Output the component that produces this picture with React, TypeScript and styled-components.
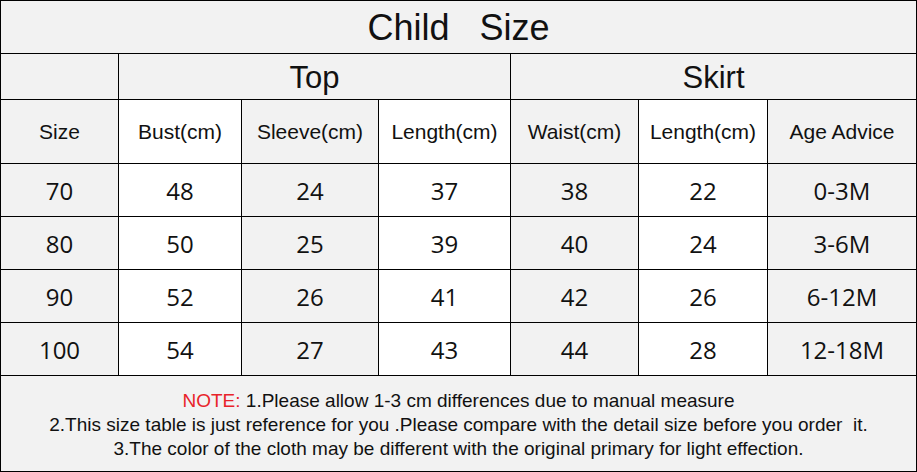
import { createGlobalStyle } from "styled-components";
import styled from "styled-components";

const GlobalStyle = createGlobalStyle`
  html, body {
    margin: 0;
    padding: 0;
    background: #ffffff;
  }
`;

const GRAY = "#f2f2f2";

const Table = styled.div`
  display: grid;
  grid-template-columns: 117px 122px 136px 131px 127px 128px 148px;
  grid-template-rows: 52px 45px 63px 52px 52px 52px 52px 95px;
  gap: 1px;
  padding: 1px;
  width: 917px;
  height: 472px;
  box-sizing: border-box;
  background: #000;
  font-family: "Liberation Sans", Arial, sans-serif;
  color: #111;
`;

const Cell = styled.div<{ $shade?: boolean; $span?: number }>`
  display: flex;
  align-items: center;
  justify-content: center;
  background: ${(p) => (p.$shade ? GRAY : "#fff")};
  grid-column: ${(p) => (p.$span ? `span ${p.$span}` : "auto")};
`;

const Title = styled(Cell)`
  font-size: 36px;
  white-space: pre;
  padding-top: 2px;
`;

const Group = styled(Cell)`
  font-size: 31px;
  padding-top: 2px;
`;

const Head = styled(Cell)`
  font-size: 21px;
`;

const Num = styled(Cell)`
  font-family: "Open Sans", "Noto Sans", sans-serif;
  font-size: 24px;
`;

const Note = styled(Cell)`
  flex-direction: column;
  font-size: 19px;
  line-height: 24px;
  padding-top: 2px;
  white-space: pre;
`;

const Red = styled.span`
  color: #e8242a;
`;

const headers = ["Size", "Bust(cm)", "Sleeve(cm)", "Length(cm)", "Waist(cm)", "Length(cm)", "Age Advice"];

const rows = [
  ["70", "48", "24", "37", "38", "22", "0-3M"],
  ["80", "50", "25", "39", "40", "24", "3-6M"],
  ["90", "52", "26", "41", "42", "26", "6-12M"],
  ["100", "54", "27", "43", "44", "28", "12-18M"],
];

// even columns (Size, Sleeve, Waist, Age) are shaded
const shaded = (i: number) => i % 2 === 0;

export default function App() {
  return (
    <>
      <GlobalStyle />
      <Table>
        <Title $shade $span={7}>{"Child   Size"}</Title>
        <Cell $shade />
        <Group $shade $span={3}>Top</Group>
        <Group $shade $span={3}>Skirt</Group>
        {headers.map((h, i) => (
          <Head key={`h${i}`} $shade={shaded(i)}>
            {h}
          </Head>
        ))}
        {rows.map((r, ri) =>
          r.map((v, i) => (
            <Num key={`${ri}-${i}`} $shade={shaded(i)}>
              {v}
            </Num>
          ))
        )}
        <Note $shade $span={7}>
          <div>
            <Red>NOTE:</Red> 1.Please allow 1-3 cm differences due to manual measure
          </div>
          <div>2.This size table is just reference for you .Please compare with the detail size before you order  it.</div>
          <div>3.The color of the cloth may be different with the original primary for light effection.</div>
        </Note>
      </Table>
    </>
  );
}
